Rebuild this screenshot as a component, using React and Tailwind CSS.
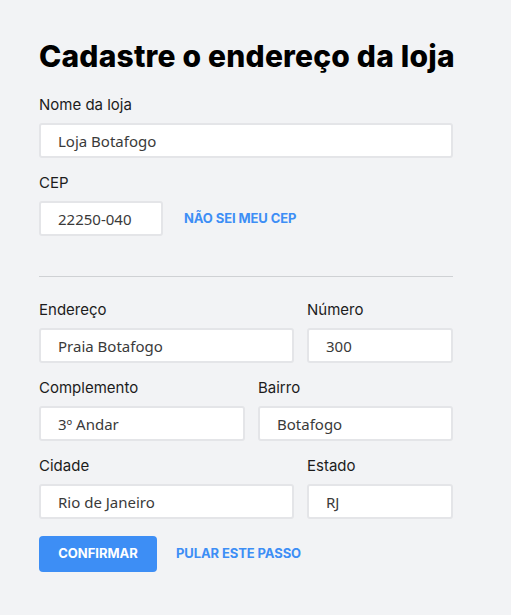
import { useState } from "react";

const labelCls = "block h-5 text-[15px] leading-5 text-[#1c1c1c] mb-2";
const inputCls =
  "h-[35px] w-full rounded-[3px] border-2 border-[#e4e5e8] bg-white px-[17px] text-[15px] text-[#3a3a3a] outline-none";

function Field({ label, value, className = "" }) {
  const [val, setVal] = useState(value);
  return (
    <div className={className}>
      {label && <label className={labelCls}>{label}</label>}
      <input
        className={inputCls}
        style={{ fontFamily: '"Noto Sans", sans-serif' }}
        value={val}
        onChange={(e) => setVal(e.target.value)}
      />
    </div>
  );
}

export default function App() {
  return (
    <div
      className="min-h-[615px] w-full bg-[#f2f3f5] px-[39px] pt-[38px]"
      style={{ fontFamily: 'Inter, "Noto Sans", sans-serif' }}
    >
      <div className="w-[414px]">
        <h1 className="text-[30px] leading-9 font-extrabold tracking-[0.2px] text-black whitespace-nowrap">
          Cadastre o endereço da loja
        </h1>

        <Field label="Nome da loja" value="Loja Botafogo" className="mt-[21px]" />

        <div className="mt-[15px]">
          <label className={labelCls}>CEP</label>
          <div className="flex items-center gap-[21px]">
            <Field value="22250-040" className="w-[124px]" />
            <button className="text-[13px] font-bold text-[#3d8ef5] tracking-[-0.1px]">
              NÃO SEI MEU CEP
            </button>
          </div>
        </div>

        <hr className="mt-[40px] border-t border-[#cfd1d4]" />

        <div className="mt-[23px] flex gap-[13px]">
          <Field label="Endereço" value="Praia Botafogo" className="flex-1" />
          <Field label="Número" value="300" className="w-[146px]" />
        </div>

        <div className="mt-[15px] flex gap-[13px]">
          <Field label="Complemento" value="3º Andar" className="w-[206px]" />
          <Field label="Bairro" value="Botafogo" className="flex-1" />
        </div>

        <div className="mt-[15px] flex gap-[13px]">
          <Field label="Cidade" value="Rio de Janeiro" className="flex-1" />
          <Field label="Estado" value="RJ" className="w-[146px]" />
        </div>

        <div className="mt-[17px] flex items-center gap-[19px]">
          <button className="h-9 w-[118px] rounded-[4px] bg-[#3d8ef5] text-[13px] font-bold text-white">
            CONFIRMAR
          </button>
          <button className="text-[13px] font-bold text-[#3d8ef5] tracking-[-0.1px]">
            PULAR ESTE PASSO
          </button>
        </div>
      </div>
    </div>
  );
}
